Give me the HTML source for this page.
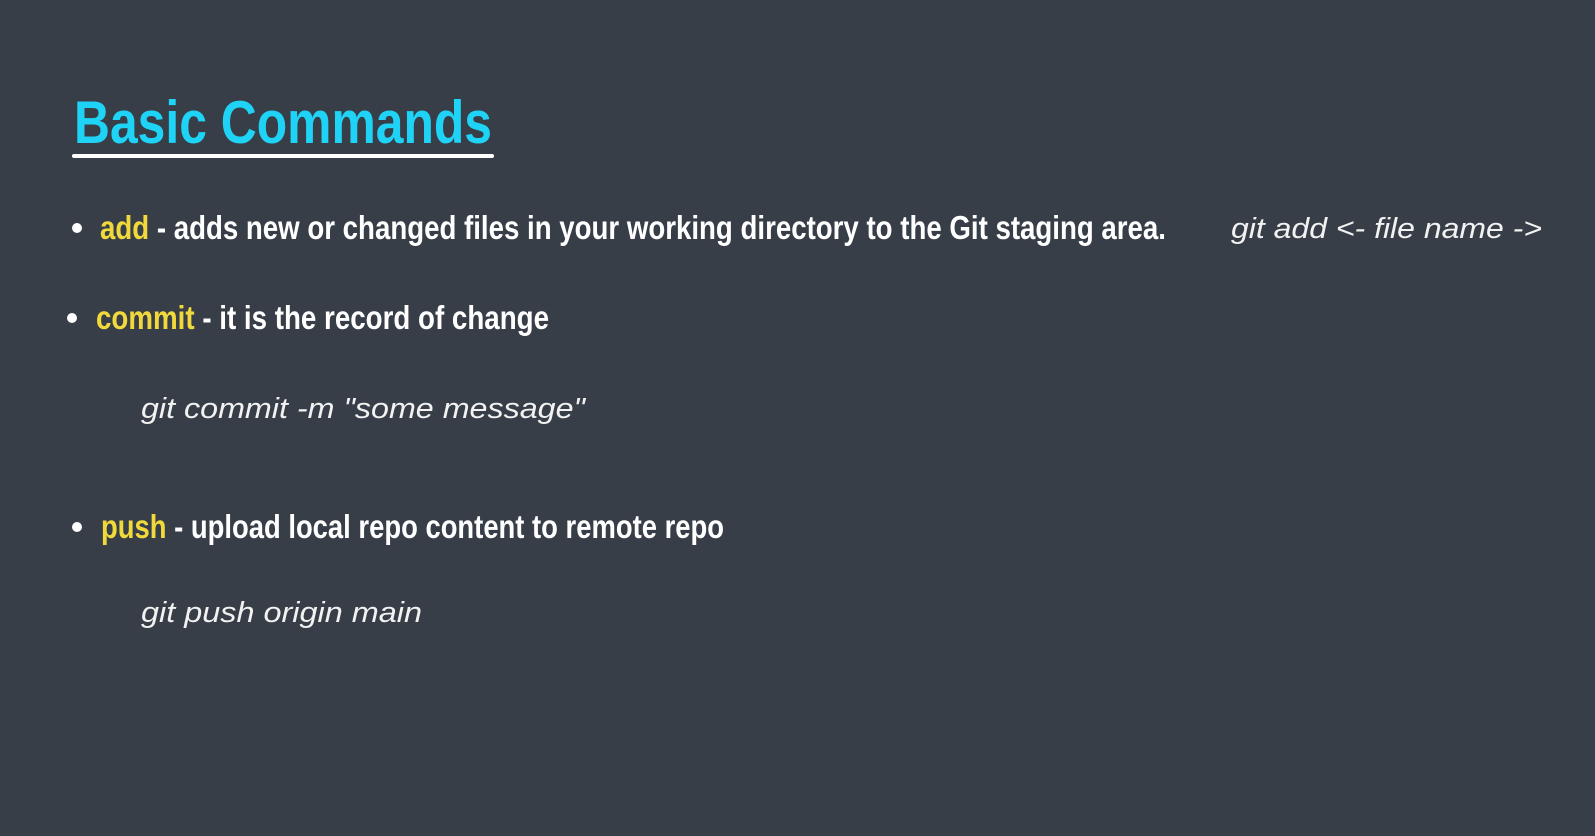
<!DOCTYPE html>
<html><head><meta charset="utf-8"><style>
html,body{margin:0;padding:0}
body{width:1595px;height:836px;background:#373e48;overflow:hidden;position:relative;font-family:"Liberation Sans Narrow","Liberation Sans",sans-serif}
.l{position:absolute;white-space:nowrap;transform-origin:0 50%;line-height:1}
.b{font-weight:bold;color:#fff;font-size:33px}
.y{color:#f2d93b}
.i{font-family:"Liberation Sans",sans-serif;font-style:italic;color:#f2f2f2;font-size:29px}
.dot{position:absolute;width:10px;height:10px;border-radius:50%;background:#fff}
</style></head><body>
<div class="l" id="t" data-w="418" style="left:74px;top:93px;font-size:60px;font-weight:bold;color:#1fd3f7">Basic Commands</div>
<div style="position:absolute;left:72px;top:154px;width:422px;height:4px;border-radius:2px;background:#fff"></div>

<div class="dot" style="left:72px;top:223px"></div>
<div class="l b" data-w="1066" style="left:100px;top:211px"><span class="y">add</span> - adds new or changed files in your working directory to the Git staging area.</div>
<div class="l i" data-w="311" style="left:1231px;top:215px">git add &lt;- file name -&gt;</div>

<div class="dot" style="left:67px;top:313px"></div>
<div class="l b" data-w="453" style="left:96px;top:301px"><span class="y">commit</span> - it is the record of change</div>
<div class="l i" data-w="444" style="left:141px;top:395px">git commit -m "some message"</div>

<div class="dot" style="left:72px;top:522px"></div>
<div class="l b" data-w="623" style="left:101px;top:510px"><span class="y">push</span> - upload local repo content to remote repo</div>
<div class="l i" data-w="281" style="left:141px;top:599px">git push origin main</div>
<script>
document.querySelectorAll('[data-w]').forEach(function(e){
 var w=e.getBoundingClientRect().width;var t=+e.getAttribute('data-w');
 if(w>0)e.style.transform='scaleX('+(t/w)+')';
});
</script>
</body></html>
